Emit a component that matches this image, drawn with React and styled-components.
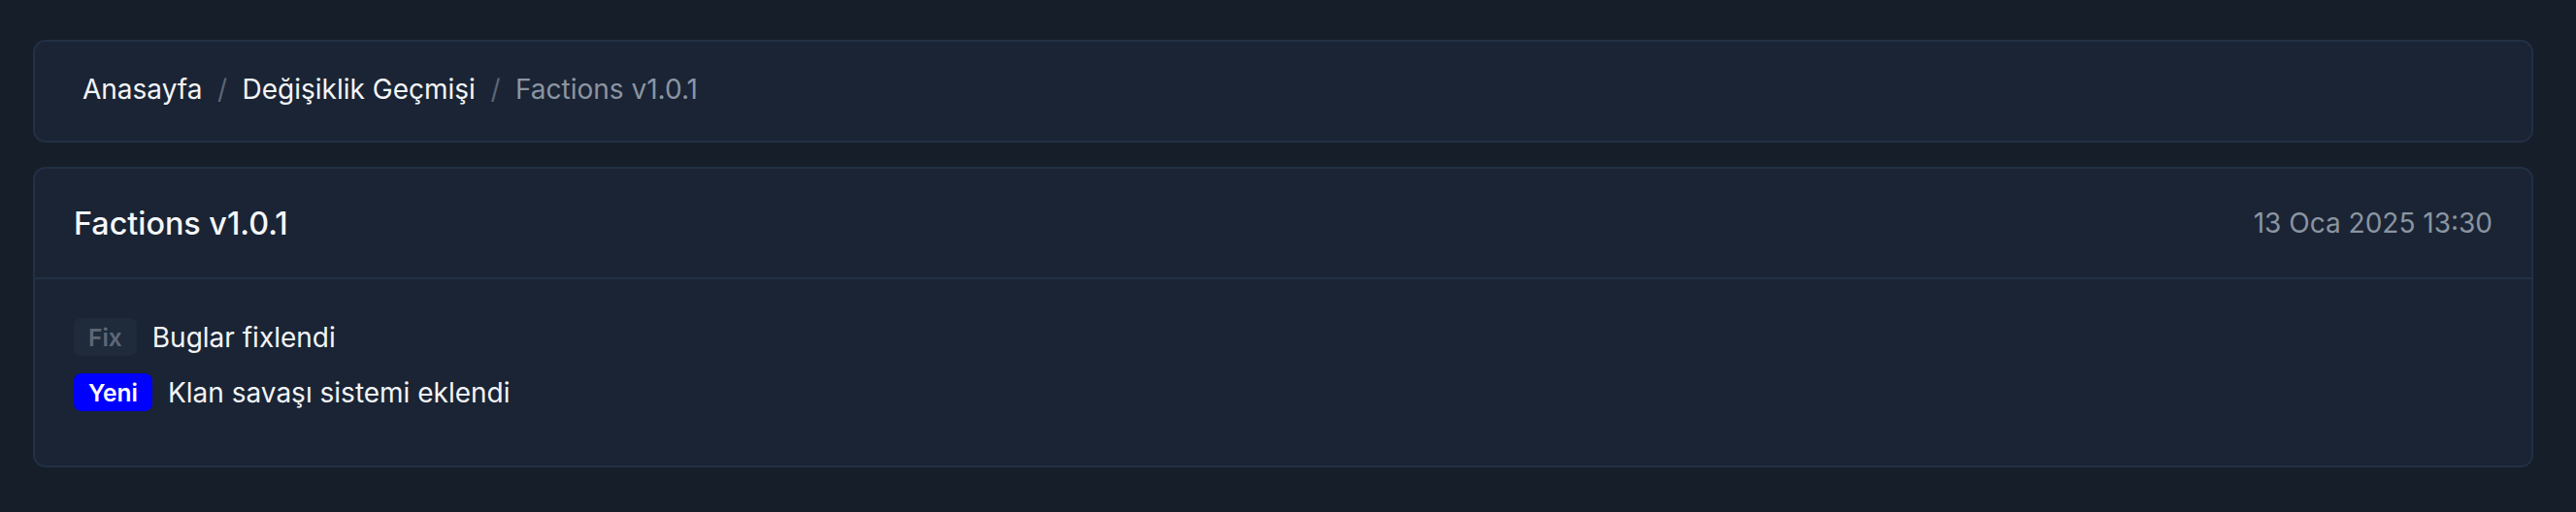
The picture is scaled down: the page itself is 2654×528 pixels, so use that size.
import React from "react";
import styled, { createGlobalStyle } from "styled-components";

const GlobalStyle = createGlobalStyle`
  html, body { margin: 0; padding: 0; background: #161e2a; }
  body { font-family: Inter, "Noto Sans", sans-serif; color: #f1f3f6; }
`;

const Page = styled.div`
  display: flex;
  flex-direction: column;
  gap: 25px;
  padding: 41px 44px 46px 34px;
  min-height: 528px;
  box-sizing: border-box;
`;

const Card = styled.section`
  background: #1a2434;
  border: 2px solid #223045;
  border-radius: 13px;
  box-sizing: border-box;
`;

const Breadcrumb = styled.nav`
  display: flex;
  align-items: center;
  height: 102px;
  padding: 0 0 4px 49px;
  box-sizing: border-box;
  font-size: 28px;
  gap: 15.5px;
`;

const Crumb = styled.span`
  color: ${(p) => (p.$current ? "#8b94a2" : "#f3f5f8")};
`;

const Sep = styled.span`
  color: #5b6676;
`;

const Header = styled.header`
  display: flex;
  align-items: center;
  justify-content: space-between;
  height: 112px;
  padding: 0 40px;
  border-bottom: 2px solid #223045;
`;

const Title = styled.h1`
  margin: 0;
  font-size: 32.3px;
  font-weight: 500;
  color: #f5f7fa;
`;

const DateText = styled.span`
  font-size: 28px;
  color: #8b94a1;
`;

const List = styled.ul`
  list-style: none;
  margin: 0;
  padding: 40px 40px 56px;
  display: flex;
  flex-direction: column;
  gap: 18px;
`;

const Item = styled.li`
  display: flex;
  align-items: center;
  gap: 16px;
  font-size: 28px;
  color: #f3f5f8;
`;

const Badge = styled.span`
  display: inline-flex;
  align-items: center;
  height: 39px;
  padding: 0 15px;
  border-radius: 8px;
  font-size: 24.5px;
  font-weight: 600;
  background: ${(p) => (p.$kind === "new" ? "#0000ff" : "#1f2a3a")};
  color: ${(p) => (p.$kind === "new" ? "#ffffff" : "#5d6776")};
`;

const items = [
  { kind: "fix", label: "Fix", text: "Buglar fixlendi" },
  { kind: "new", label: "Yeni", text: "Klan savaşı sistemi eklendi" },
];

export default function App() {
  return (
    <>
      <GlobalStyle />
      <Page>
        <Card>
          <Breadcrumb>
            <Crumb>Anasayfa</Crumb>
            <Sep>/</Sep>
            <Crumb>Değişiklik Geçmişi</Crumb>
            <Sep>/</Sep>
            <Crumb $current>Factions v1.0.1</Crumb>
          </Breadcrumb>
        </Card>
        <Card>
          <Header>
            <Title>Factions v1.0.1</Title>
            <DateText>13 Oca 2025 13:30</DateText>
          </Header>
          <List>
            {items.map((it) => (
              <Item key={it.label}>
                <Badge $kind={it.kind}>{it.label}</Badge>
                <span>{it.text}</span>
              </Item>
            ))}
          </List>
        </Card>
      </Page>
    </>
  );
}
